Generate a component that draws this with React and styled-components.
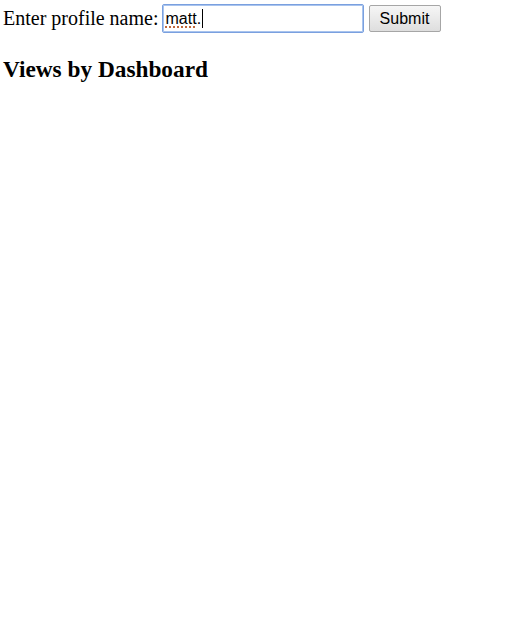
import React from "react";
import styled, { createGlobalStyle } from "styled-components";

const GlobalStyle = createGlobalStyle`
  html, body {
    margin: 0;
    padding: 0;
    background: #fff;
  }
  body {
    font-family: "Liberation Serif", "Times New Roman", serif;
    color: #000;
  }
`;

const Page = styled.div`
  padding: 4px 0 0 3px;
`;

const Form = styled.form`
  display: flex;
  align-items: center;
  height: 29px;
`;

const Label = styled.label`
  font-size: 20px;
  margin-right: 3px;
`;

const Field = styled.div`
  box-sizing: border-box;
  width: 202px;
  height: 29px;
  border: 1px solid #7aa0df;
  box-shadow: 0 0 0 1px #a9c4ee inset;
  border-radius: 2px;
  padding: 0 3px;
  display: flex;
  align-items: center;
  font-family: "Liberation Sans", Arial, sans-serif;
  font-size: 16px;
  background: #fff;
`;

const Misspelled = styled.span`
  text-decoration: underline dotted #c0683c;
  text-underline-offset: 3px;
  text-decoration-thickness: 2px;
`;

const Caret = styled.span`
  display: inline-block;
  width: 1px;
  height: 19px;
  background: #000;
  margin-left: 1px;
`;

const SubmitButton = styled.button`
  box-sizing: border-box;
  margin-left: 5px;
  height: 27px;
  width: 72px;
  padding: 0;
  font-family: "Liberation Sans", Arial, sans-serif;
  font-size: 16px;
  color: #000;
  border: 1px solid #a6a6a6;
  border-radius: 2px;
  background: linear-gradient(#f6f6f6, #dedede);
`;

const Heading = styled.h3`
  font-size: 23.3px;
  font-weight: bold;
  margin: 23px 0 0;
`;

export default function App() {
  return (
    <>
      <GlobalStyle />
      <Page>
        <Form onSubmit={(e) => e.preventDefault()}>
          <Label>Enter profile name:</Label>
          <Field>
            <Misspelled>matt</Misspelled>.<Caret />
          </Field>
          <SubmitButton type="submit">Submit</SubmitButton>
        </Form>
        <Heading>Views by Dashboard</Heading>
      </Page>
    </>
  );
}
